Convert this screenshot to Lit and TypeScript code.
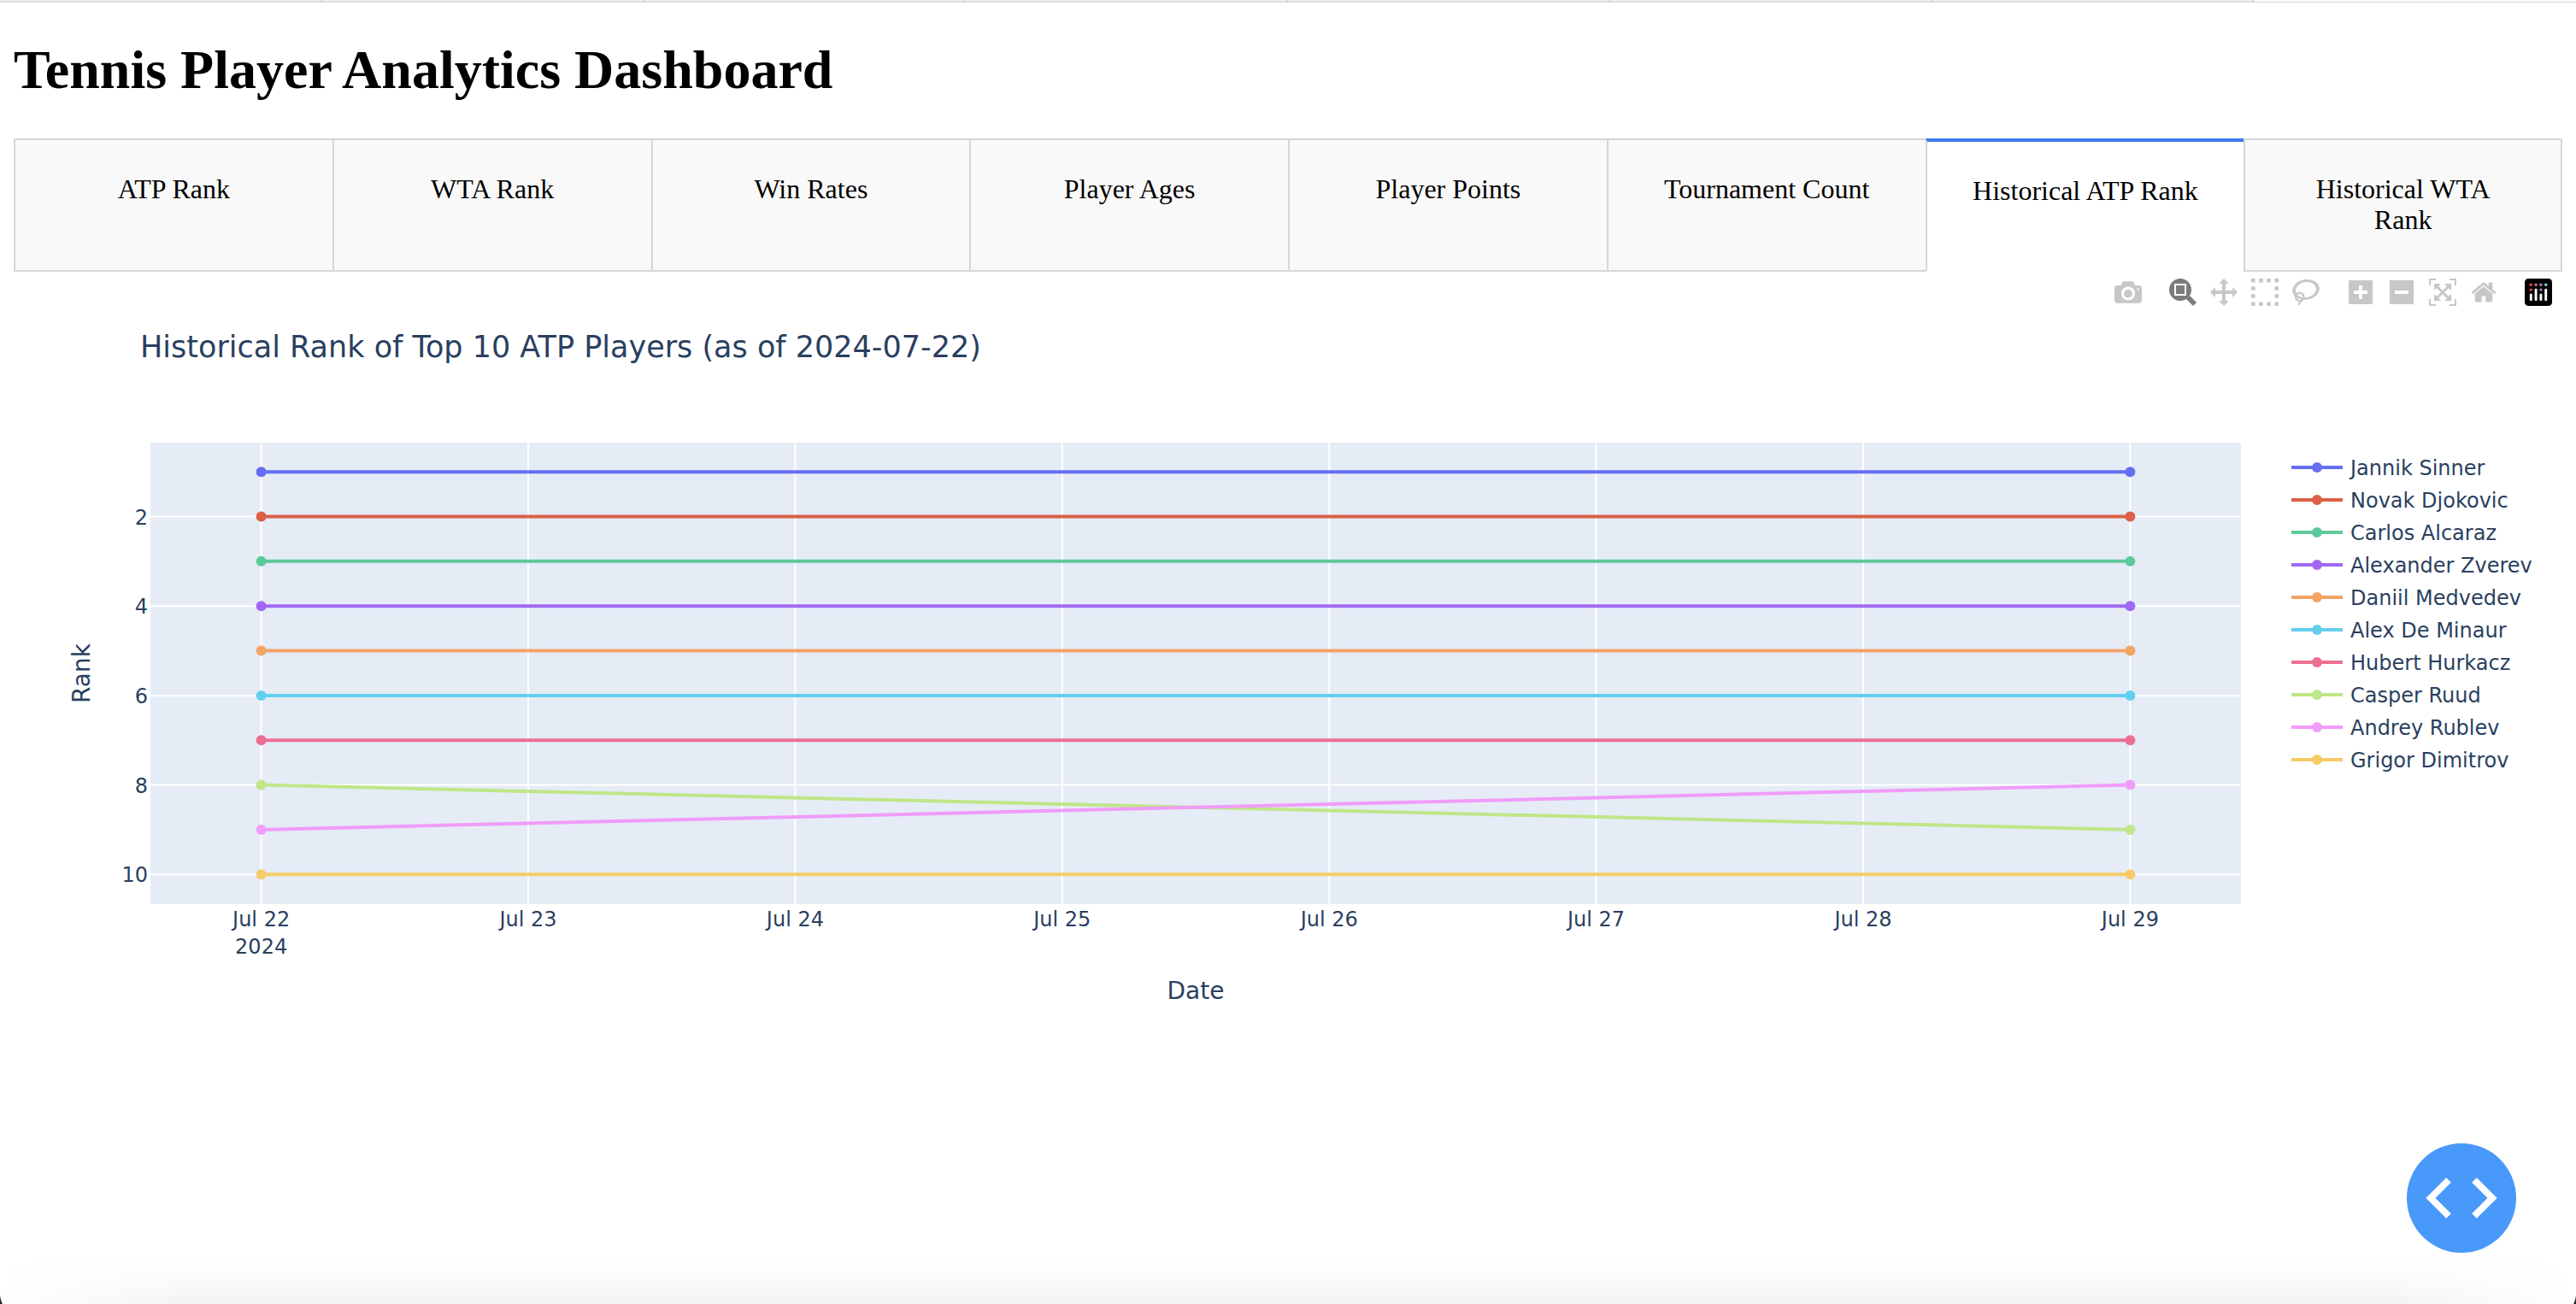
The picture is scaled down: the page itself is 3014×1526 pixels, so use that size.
import { LitElement, html, css, svg } from "lit";
import { customElement, state } from "lit/decorators.js";

interface Player {
  name: string;
  color: string;
  ranks: [number, number];
}

interface Tool {
  label: string;
  width: number;
  path: string;
}

const TABS = [
  "ATP Rank",
  "WTA Rank",
  "Win Rates",
  "Player Ages",
  "Player Points",
  "Tournament Count",
  "Historical ATP Rank",
  "Historical WTA Rank",
];

const PLAYERS: Player[] = [
  { name: "Jannik Sinner", color: "#656ef2", ranks: [1, 1] },
  { name: "Novak Djokovic", color: "#dd5f46", ranks: [2, 2] },
  { name: "Carlos Alcaraz", color: "#5dc99a", ranks: [3, 3] },
  { name: "Alexander Zverev", color: "#a068f3", ranks: [4, 4] },
  { name: "Daniil Medvedev", color: "#f2a465", ranks: [5, 5] },
  { name: "Alex De Minaur", color: "#63cfee", ranks: [6, 6] },
  { name: "Hubert Hurkacz", color: "#ec6f92", ranks: [7, 7] },
  { name: "Casper Ruud", color: "#bfe688", ranks: [8, 9] },
  { name: "Andrey Rublev", color: "#f19cf9", ranks: [9, 8] },
  { name: "Grigor Dimitrov", color: "#f7cb67", ranks: [10, 10] },
];

const DAYS = ["Jul 22", "Jul 23", "Jul 24", "Jul 25", "Jul 26", "Jul 27", "Jul 28", "Jul 29"];
const RANK_TICKS = [2, 4, 6, 8, 10];

const TOOL_GROUPS: Tool[][] = [
  [
    {
      label: "Download plot as a png",
      width: 1000,
      path: "m500 450c-83 0-150-67-150-150 0-83 67-150 150-150 83 0 150 67 150 150 0 83-67 150-150 150z m400 150h-120c-16 0-34 13-39 29l-31 93c-6 15-23 28-40 28h-340c-16 0-34-13-39-28l-31-94c-6-15-23-28-40-28h-120c-55 0-100-45-100-100v-450c0-55 45-100 100-100h800c55 0 100 45 100 100v450c0 55-45 100-100 100z m-400-550c-138 0-250 112-250 250 0 138 112 250 250 250 138 0 250-112 250-250 0-138-112-250-250-250z m365 380c-19 0-35 16-35 35 0 19 16 35 35 35 19 0 35-16 35-35 0-19-16-35-35-35z",
    },
  ],
  [
    {
      label: "Zoom",
      width: 1000,
      path: "m1000-25l-250 251c40 63 63 138 63 218 0 224-182 406-407 406-224 0-406-182-406-406s183-406 407-406c80 0 155 22 218 62l250-250 125 125z m-812 250l0 438 437 0 0-438-437 0z m62 375l313 0 0-312-313 0 0 312z",
    },
    {
      label: "Pan",
      width: 1000,
      path: "m1000 350l-187 188 0-125-250 0 0 250 125 0-188 187-187-187 125 0 0-250-250 0 0 125-188-188 186-187 0 125 252 0 0-250-125 0 187-188 188 188-125 0 0 250 250 0 0-126 187 188z",
    },
    {
      label: "Box Select",
      width: 1000,
      path: "m0 850l0-143 143 0 0 143-143 0z m286 0l0-143 143 0 0 143-143 0z m285 0l0-143 143 0 0 143-143 0z m286 0l0-143 143 0 0 143-143 0z m-857-286l0-143 143 0 0 143-143 0z m857 0l0-143 143 0 0 143-143 0z m-857-285l0-143 143 0 0 143-143 0z m857 0l0-143 143 0 0 143-143 0z m-857-286l0-143 143 0 0 143-143 0z m286 0l0-143 143 0 0 143-143 0z m285 0l0-143 143 0 0 143-143 0z m286 0l0-143 143 0 0 143-143 0z",
    },
    {
      label: "Lasso Select",
      width: 1031,
      path: "m1018 538c-36 207-290 336-568 286-277-48-473-256-436-463 10-57 36-108 76-151-13-66 11-137 68-183 34-28 75-41 114-42l-55-70 0 0c-2-1-3-2-4-3-10-14-8-34 5-45 14-11 34-8 45 4 1 1 2 3 2 5l0 0 113 140c16 11 31 24 45 40 4 3 6 7 8 11 48-3 100 0 151 9 278 48 473 255 436 462z m-624-379c-80 14-149 48-197 96 42 42 109 47 156 9 33-26 47-66 41-105z m-187-74c-19 16-33 37-39 60 50-32 109-55 174-68-42-25-95-24-135 8z m360 75c-34-7-69-9-102-8 8 62-16 128-68 170-73 59-175 54-244-5-9 20-16 40-20 61-28 159 121 317 333 354s407-60 434-217c28-159-121-318-333-355z",
    },
  ],
  [
    {
      label: "Zoom in",
      width: 875,
      path: "m1 787l0-875 875 0 0 875-875 0z m687-500l-187 0 0-187-125 0 0 187-188 0 0 125 188 0 0 187 125 0 0-187 187 0 0-125z",
    },
    {
      label: "Zoom out",
      width: 875,
      path: "m0 788l0-876 876 0 0 876-876 0z m688-500l-500 0 0 125 500 0 0-125z",
    },
    {
      label: "Autoscale",
      width: 1000,
      path: "m250 850l-187 0-63 0 0-62 0-188 63 0 0 188 187 0 0 62z m688 0l-188 0 0-62 188 0 0-188 62 0 0 188 0 62-62 0z m-875-938l0 188-63 0 0-188 0-62 63 0 187 0 0 62-187 0z m875 188l0-188-188 0 0-62 188 0 62 0 0 62 0 188-62 0z m-125 188l-1 0-93-94-156 156 156 156 92-93 2 0 0 250-250 0 0-2 93-92-156-156-156 156 94 92 0 2-250 0 0-250 0 0 93 93 157-156-157-156-93 94 0 0 0-250 250 0 0 0-94 93 156 157 156-157-93-93 0 0 250 0 0 250z",
    },
    {
      label: "Reset axes",
      width: 928,
      path: "m786 296v-267q0-15-11-26t-25-10h-214v214h-143v-214h-214q-15 0-25 10t-11 26v267q0 1 0 2t0 2l321 264 321-264q1-1 1-4z m124 39l-34-41q-5-5-12-6h-2q-7 0-12 3l-386 322-386-322q-7-4-13-4-7 2-12 7l-35 41q-4 5-3 13t6 12l401 334q18 15 42 15t43-15l136-114v109q0 8 5 13t13 5h107q8 0 13-5t5-13v-227l122-102q5-5 6-12t-4-13z",
    },
  ],
];

/** Horizontal position of a day in the plot area, in percent. */
const dayX = (day: number) => `${5.3 + (day * 89.4) / 7}%`;
/** Vertical position of a rank in the plot area, in percent. */
const rankY = (rank: number) => `${6.33 + ((rank - 1) * 87.24) / 9}%`;

@customElement("rank-toolbar")
export class RankToolbar extends LitElement {
  @state() private mode = "Zoom";

  static styles = css`
    :host {
      display: flex;
      justify-content: flex-end;
      gap: 16px;
      padding: 2px 4px 0 0;
    }
    .group {
      display: flex;
    }
    .tool {
      display: block;
      padding: 6px 8px;
      border: 0;
      background: none;
      color: #c7c7c7;
      cursor: pointer;
    }
    .tool.active {
      color: #7c7c7c;
    }
    .icon {
      display: block;
      width: 32px;
      height: 32px;
      fill: currentColor;
    }
  `;

  render() {
    return html`
      ${TOOL_GROUPS.map(
        (group) => html`<div class="group">
          ${group.map(
            (tool) => html`<button
              class="tool ${tool.label === this.mode ? "active" : ""}"
              aria-label=${tool.label}
              @click=${() => (this.mode = tool.label)}
            >
              <svg class="icon" viewBox="0 0 ${tool.width} 1000">
                <path transform="matrix(1 0 0 -1 0 850)" d=${tool.path}></path>
              </svg>
            </button>`
          )}
        </div>`
      )}
      <a class="tool" href="https://plotly.com/" aria-label="Produced with Plotly">
        <svg class="icon" viewBox="0 0 132 132">
          <rect width="132" height="132" rx="18" fill="#000"></rect>
          <circle cx="30" cy="30" r="7" fill="#ee4266"></circle>
          <circle cx="54" cy="30" r="7" fill="#c46a9c"></circle>
          <circle cx="78" cy="30" r="7" fill="#a08bc0"></circle>
          <circle cx="102" cy="30" r="7" fill="#7fd6e6"></circle>
          <circle cx="30" cy="54" r="7" fill="#ee4266"></circle>
          <circle cx="78" cy="54" r="7" fill="#a08bc0"></circle>
          <g fill="#fff">
            <rect x="24" y="72" width="12" height="36" rx="6"></rect>
            <rect x="48" y="48" width="12" height="60" rx="6"></rect>
            <rect x="72" y="72" width="12" height="36" rx="6"></rect>
            <rect x="96" y="48" width="12" height="60" rx="6"></rect>
          </g>
        </svg>
      </a>
    `;
  }
}

@customElement("rank-chart")
export class RankChart extends LitElement {
  static styles = css`
    :host {
      display: block;
      color: #2a3f5f;
      font-family: Verdana, "DejaVu Sans", sans-serif;
    }
    .title {
      margin: 0;
      padding: 20px 0 0 148px;
      font-size: 35px;
      font-weight: 400;
      line-height: 44px;
    }
    .body {
      display: grid;
      grid-template-columns: 160px minmax(0, 1fr) 376px;
      padding-top: 90px;
    }
    .axis,
    .plot {
      display: block;
      width: 100%;
      height: 540px;
      overflow: visible;
      fill: #2a3f5f;
    }
    .plane {
      fill: #e5ecf6;
    }
    .grid {
      stroke: #fff;
      stroke-width: 2;
    }
    .tick {
      font-size: 24px;
    }
    .axis-title {
      font-size: 28px;
    }
    .date {
      grid-column: 2;
      padding-top: 84px;
      font-size: 28px;
      line-height: 36px;
      text-align: center;
    }
    .legend {
      margin: 0;
      padding: 10px 0 0 59px;
      list-style: none;
    }
    .entry {
      display: flex;
      align-items: center;
      gap: 9px;
      height: 38px;
      font-size: 24px;
      white-space: nowrap;
    }
    .name {
      padding-top: 2px;
    }
    .swatch {
      width: 60px;
      height: 12px;
    }
  `;

  render() {
    return html`
      <h2 class="title">Historical Rank of Top 10 ATP Players (as of 2024-07-22)</h2>
      <div class="body">
        <svg class="axis">
          <text class="axis-title" text-anchor="middle" transform="translate(89 270) rotate(-90)">Rank</text>
          ${RANK_TICKS.map(
            (rank) => svg`<text class="tick" x="157" y=${rankY(rank)} dy="9" text-anchor="end">${rank}</text>`
          )}
        </svg>
        <svg class="plot">
          <rect class="plane" width="100%" height="100%"></rect>
          ${DAYS.map((_, i) => svg`<line class="grid" x1=${dayX(i)} x2=${dayX(i)} y1="0" y2="100%"></line>`)}
          ${RANK_TICKS.map(
            (rank) => svg`<line class="grid" x1="0" x2="100%" y1=${rankY(rank)} y2=${rankY(rank)}></line>`
          )}
          ${PLAYERS.map(
            ({ color, ranks: [from, to] }) => svg`
              <line x1=${dayX(0)} x2=${dayX(7)} y1=${rankY(from)} y2=${rankY(to)} stroke=${color} stroke-width="4"></line>
              <circle cx=${dayX(0)} cy=${rankY(from)} r="6" fill=${color}></circle>
              <circle cx=${dayX(7)} cy=${rankY(to)} r="6" fill=${color}></circle>`
          )}
          ${DAYS.map(
            (day, i) => svg`<text class="tick" x=${dayX(i)} y="100%" dy="26" text-anchor="middle">${day}</text>`
          )}
          <text class="tick" x=${dayX(0)} y="100%" dy="58" text-anchor="middle">2024</text>
        </svg>
        <ul class="legend">
          ${PLAYERS.map(
            ({ name, color }) => html`<li class="entry">
              <svg class="swatch" viewBox="0 0 60 12">
                <path d="M0 6h60" stroke=${color} stroke-width="4"></path>
                <circle cx="30" cy="6" r="6" fill=${color}></circle>
              </svg>
              <span class="name">${name}</span>
            </li>`
          )}
        </ul>
        <div class="date">Date</div>
      </div>
    `;
  }
}

@customElement("app-root")
export class AppRoot extends LitElement {
  @state() private selected = 6;

  static styles = css`
    :host {
      display: block;
      box-sizing: border-box;
      min-height: 100vh;
      background:
        radial-gradient(circle at 40px 0, transparent 40px, #222 41px) left bottom / 40px 16px no-repeat,
        radial-gradient(circle at 0 0, transparent 40px, #222 41px) right bottom / 40px 16px no-repeat,
        linear-gradient(to right, #fff, transparent 220px, transparent calc(100% - 220px), #fff),
        linear-gradient(to top, #f3f3f3, #fafafa 24px, #fff 56px);
      color: #000;
      font-family: "Times New Roman", "Liberation Serif", serif;
    }
    .strip {
      display: grid;
      grid-template-columns: repeat(8, 1fr);
      height: 2px;
      border-bottom: 1px solid #d6d6d6;
      background: #ebebeb;
    }
    .segment {
      border-right: 2px solid #d6d6d6;
    }
    .segment:last-child {
      border-right: 0;
      background: #f9f9f9;
    }
    .page {
      padding: 42px 16px 0;
    }
    .heading {
      margin: 0;
      padding-bottom: 43px;
      font-size: 64px;
      font-weight: 700;
      line-height: 74px;
    }
    .tabs {
      display: grid;
      grid-template-columns: repeat(8, minmax(0, 1fr));
    }
    .tab {
      display: flex;
      justify-content: center;
      align-items: flex-start;
      padding: 39px 50px 41px;
      border: 2px solid #d6d6d6;
      border-right-width: 0;
      background: #f9f9f9;
      color: #000;
      font: inherit;
      font-size: 32px;
      line-height: 36px;
      text-align: center;
      cursor: pointer;
    }
    .tab:last-child {
      border-right-width: 2px;
    }
    .tab.selected {
      border-top: 4px solid #3c78f0;
      border-bottom-color: #fff;
      background: #fff;
    }
    .debug {
      position: fixed;
      right: 70px;
      bottom: 60px;
      width: 128px;
      height: 128px;
      padding: 0;
      border: 0;
      border-radius: 50%;
      background: #4899f9;
      cursor: pointer;
    }
    .chevrons {
      display: block;
      width: 128px;
      height: 128px;
      fill: none;
      stroke: #fff;
      stroke-width: 8;
    }
  `;

  render() {
    return html`
      <div class="strip">${TABS.map(() => html`<div class="segment"></div>`)}</div>
      <main class="page">
        <h1 class="heading">Tennis Player Analytics Dashboard</h1>
        <div class="tabs" role="tablist">
          ${TABS.map(
            (tab, i) => html`<button
              class="tab ${i === this.selected ? "selected" : ""}"
              role="tab"
              aria-selected=${i === this.selected}
              @click=${() => (this.selected = i)}
            >
              ${tab}
            </button>`
          )}
        </div>
        <rank-toolbar></rank-toolbar>
        <rank-chart></rank-chart>
      </main>
      <button class="debug" aria-label="Toggle developer tools">
        <svg class="chevrons" viewBox="0 0 128 128">
          <path d="M49 43 28 64 49 85M79 43 100 64 79 85"></path>
        </svg>
      </button>
    `;
  }
}
